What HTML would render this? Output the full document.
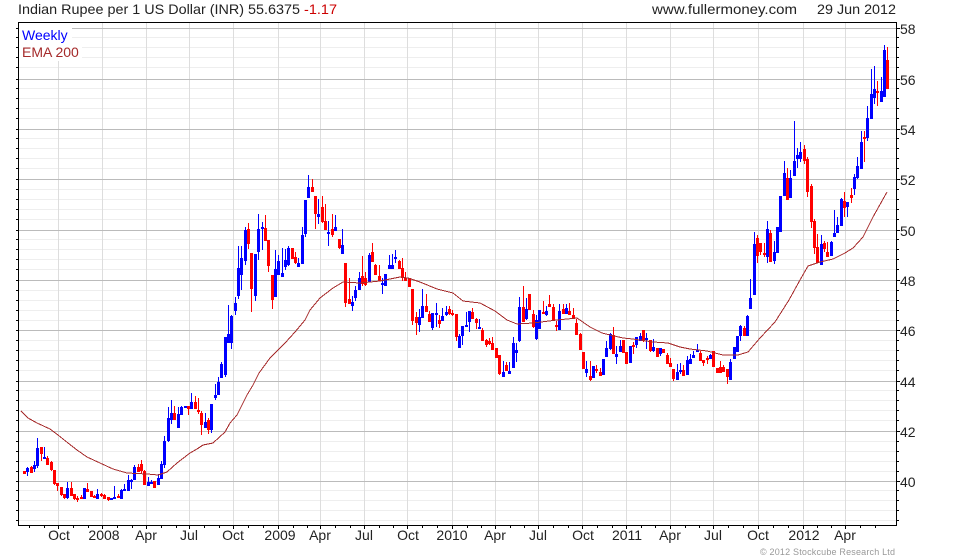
<!DOCTYPE html>
<html><head><meta charset="utf-8"><style>
html,body{margin:0;padding:0;background:#fff}
svg{display:block}
text{font-family:"Liberation Sans",Arial,sans-serif;font-size:14px;fill:#222}
</style></head><body>
<svg width="980" height="560" viewBox="0 0 980 560" xmlns="http://www.w3.org/2000/svg">
<rect width="980" height="560" fill="#fff"/>
<g shape-rendering="crispEdges" fill="none">
<path stroke="#eee" d="M19 37.5H896M19 47.5H896M19 57.5H896M19 67.5H896M19 88.5H896M19 98.5H896M19 108.5H896M19 118.5H896M19 138.5H896M19 148.5H896M19 158.5H896M19 168.5H896M19 189.5H896M19 199.5H896M19 209.5H896M19 219.5H896M19 239.5H896M19 249.5H896M19 259.5H896M19 269.5H896M19 290.5H896M19 300.5H896M19 310.5H896M19 320.5H896M19 340.5H896M19 350.5H896M19 360.5H896M19 370.5H896M19 390.5H896M19 400.5H896M19 410.5H896M19 420.5H896M19 441.5H896M19 451.5H896M19 461.5H896M19 471.5H896M19 490.5H896M19 500.5H896M19 510.5H896M19 520.5H896"/>
<path stroke="#ddd" d="M58.5 23V525M102.5 23V525M146.5 23V525M189.5 23V525M233.5 23V525M278.5 23V525M320.5 23V525M364.5 23V525M407.5 23V525M452.5 23V525M495.5 23V525M538.5 23V525M582.5 23V525M626.5 23V525M670.5 23V525M713.5 23V525M758.5 23V525M803.5 23V525M845.5 23V525"/>
<path stroke="#bbb" d="M19 28.5H896M19 79.5H896M19 129.5H896M19 179.5H896M19 230.5H896M19 280.5H896M19 330.5H896M19 381.5H896M19 431.5H896M19 481.5H896"/>
<rect x="19" y="23" width="53" height="20" fill="#fff"/>
<rect x="19" y="43" width="63" height="18" fill="#fff"/>
<path stroke="#0000ff" d="M27.5 467V476M34.5 461V472M37.5 438V468M44.5 447V459M67.5 482V499M97.5 489V499M114.5 486V499M121.5 489V499M124.5 484V491M128.5 475V491M131.5 479V489M134.5 465V480M148.5 477V486M151.5 480V484M158.5 474V485M161.5 461V479M164.5 436V468M168.5 407V442M171.5 400V424M178.5 407V428M181.5 406V415M191.5 393V409M205.5 413V428M211.5 404V433M215.5 384V400M218.5 377V395M221.5 362V378M225.5 337V377M228.5 305V343M231.5 315V349M235.5 297V315M238.5 246V299M241.5 246V290M245.5 227V265M255.5 254V301M258.5 214V260M262.5 222V250M275.5 250V297M278.5 255V275M282.5 248V277M285.5 249V270M288.5 246V266M298.5 258V267M302.5 227V264M305.5 200V237M308.5 175V198M318.5 199V224M328.5 221V246M335.5 215V231M342.5 229V254M352.5 296V311M355.5 286V301M359.5 272V290M369.5 253V282M382.5 278V294M389.5 255V269M392.5 254V269M395.5 250V263M419.5 309V332M422.5 289V318M432.5 313V330M436.5 303V327M442.5 308V321M446.5 306V316M459.5 334V348M462.5 326V345M466.5 312V327M469.5 311V332M479.5 319V329M503.5 361V377M509.5 362V374M513.5 337V368M516.5 343V362M519.5 297V342M526.5 298V320M536.5 315V340M546.5 306V316M559.5 304V330M566.5 304V314M586.5 361V377M606.5 341V357M610.5 333V350M616.5 346V364M620.5 340V352M636.5 337V348M640.5 333V341M646.5 333V349M653.5 339V352M660.5 348V356M677.5 364V380M680.5 363V374M687.5 356V375M690.5 354V364M693.5 351V358M697.5 344V352M710.5 354V359M730.5 359V380M740.5 325V341M747.5 315V336M750.5 279V309M754.5 232V295M767.5 221V263M774.5 241V264M784.5 161V196M790.5 170V198M794.5 121V176M797.5 148V168M800.5 142V162M821.5 235V265M831.5 241V256M834.5 210V237M837.5 217V233M841.5 198V226M847.5 202V217M854.5 174V195M857.5 157V179M861.5 131V169M867.5 106V141M871.5 69V119M874.5 66V104M881.5 77V102M884.5 45V97"/>
<path stroke="#ff0000" d="M31.5 466V473M41.5 447V461M47.5 456V465M51.5 461V471M54.5 470V485M57.5 483V491M61.5 487V496M64.5 494V499M71.5 482V496M74.5 494V500M77.5 496V502M81.5 495V499M87.5 483V492M94.5 495V498M101.5 493V497M104.5 494V499M108.5 497V501M118.5 494V498M138.5 464V472M141.5 460V474M144.5 470V485M174.5 406V420M188.5 406V415M195.5 396V409M198.5 398V414M201.5 411V435M208.5 418V434M248.5 223V249M251.5 253V312M265.5 215V241M268.5 240V272M272.5 275V309M295.5 252V264M312.5 179V192M315.5 196V229M322.5 196V223M325.5 204V230M332.5 214V237M339.5 239V249M345.5 263V307M349.5 278V304M362.5 256V286M365.5 272V286M372.5 243V262M375.5 264V275M379.5 265V281M399.5 260V269M402.5 258V281M405.5 272V281M412.5 289V325M416.5 312V335M426.5 294V312M429.5 311V322M439.5 315V328M449.5 306V315M452.5 310V316M456.5 314V341M472.5 308V319M476.5 318V329M482.5 328V341M486.5 339V347M489.5 338V345M492.5 337V350M499.5 355V375M506.5 362V371M523.5 286V322M533.5 310V328M543.5 301V314M549.5 295V307M553.5 304V321M556.5 321V331M563.5 304V314M569.5 303V315M573.5 308V319M576.5 319V335M580.5 333V350M590.5 361V381M596.5 365V373M600.5 368V376M613.5 327V354M633.5 342V354M643.5 330V342M650.5 340V352M660.5 352V352M667.5 353V364M670.5 358V367M673.5 369V381M683.5 365V376M700.5 351V361M703.5 360V366M707.5 356V364M720.5 361V373M723.5 365V372M727.5 369V384M744.5 326V336M757.5 235V263M760.5 243V255M764.5 243V257M770.5 230V262M787.5 168V200M804.5 145V164M807.5 157V197M811.5 184V228M814.5 219V254M817.5 234V263M824.5 241V252M827.5 242V257M844.5 192V217M851.5 188V203M864.5 131V162M877.5 81V106M887.5 47V89"/>
<path stroke="#0000ff" stroke-width="3" d="M27.5 468V472M34.5 465V469M37.5 448V466M44.5 457V459M67.5 488V498M84.5 488V499M97.5 494V499M111.5 498V500M114.5 497V499M121.5 490V499M124.5 489V491M128.5 480V491M131.5 480V482M134.5 467V480M148.5 482V486M151.5 482V484M158.5 478V485M161.5 464V479M164.5 441V465M168.5 418V441M171.5 413V420M178.5 414V428M181.5 407V415M185.5 406V408M191.5 402V409M205.5 422V428M211.5 404V430M215.5 395V398M218.5 382V395M221.5 364V378M225.5 337V375M228.5 334V343M231.5 316V343M235.5 303V311M238.5 268V296M241.5 258V275M245.5 230V261M255.5 254V296M258.5 229V252M262.5 227V229M275.5 269V297M278.5 261V275M282.5 273V277M285.5 260V267M288.5 248V265M298.5 263V267M302.5 235V264M305.5 200V234M308.5 187V198M318.5 214V217M328.5 232V234M335.5 227V231M342.5 245V254M352.5 302V306M355.5 290V298M359.5 278V290M369.5 255V282M382.5 283V285M385.5 274V286M389.5 265V269M392.5 265V269M395.5 257V259M419.5 317V325M422.5 306V318M432.5 313V328M436.5 313V315M442.5 316V321M446.5 312V315M459.5 336V348M462.5 326V336M466.5 325V327M469.5 311V322M479.5 327V329M503.5 372V377M509.5 371V374M513.5 343V368M516.5 350V353M519.5 307V341M526.5 309V319M536.5 320V339M539.5 310V329M546.5 311V315M559.5 311V330M566.5 308V314M586.5 369V373M593.5 366V378M603.5 359V375M606.5 348V357M610.5 334V349M616.5 354V357M620.5 346V352M630.5 346V363M636.5 337V345M640.5 336V341M646.5 338V340M653.5 347V351M660.5 348V354M677.5 372V380M680.5 370V372M687.5 360V375M690.5 359V364M693.5 355V358M697.5 350V352M710.5 355V359M730.5 362V380M734.5 347V359M737.5 336V352M740.5 326V336M747.5 316V336M750.5 298V309M754.5 244V295M767.5 229V257M774.5 252V261M777.5 227V253M780.5 196V232M784.5 173V196M790.5 178V198M794.5 161V176M797.5 155V159M800.5 152V159M821.5 244V265M831.5 242V256M834.5 233V237M837.5 225V233M841.5 199V226M847.5 202V207M854.5 177V189M857.5 166V178M861.5 142V169M867.5 118V138M871.5 94V119M874.5 89V98M881.5 91V102M884.5 50V97"/>
<path stroke="#ff0000" stroke-width="3" d="M24.5 471V474M31.5 467V473M41.5 447V454M47.5 458V465M51.5 462V470M54.5 470V484M57.5 483V486M61.5 487V495M64.5 494V498M71.5 488V496M74.5 494V499M77.5 498V500M81.5 497V499M87.5 489V492M91.5 491V497M94.5 496V498M101.5 494V496M104.5 495V499M108.5 497V500M118.5 496V498M138.5 467V472M141.5 464V471M144.5 471V485M154.5 481V488M174.5 413V420M188.5 406V409M195.5 402V409M198.5 410V412M201.5 413V425M208.5 420V430M248.5 229V244M251.5 253V289M265.5 228V241M268.5 240V266M272.5 275V300M292.5 248V259M295.5 257V263M312.5 187V192M315.5 196V214M322.5 207V222M325.5 221V230M332.5 229V235M339.5 239V248M345.5 263V303M349.5 299V304M362.5 276V284M365.5 278V285M372.5 252V262M375.5 265V275M379.5 276V281M399.5 261V269M402.5 268V278M405.5 278V281M409.5 278V287M412.5 289V321M416.5 317V323M426.5 306V312M429.5 314V322M439.5 320V324M449.5 309V314M452.5 313V315M456.5 314V337M472.5 312V319M476.5 319V323M482.5 330V341M486.5 340V345M489.5 341V344M492.5 343V350M496.5 348V358M499.5 355V374M506.5 365V371M523.5 307V322M529.5 294V310M533.5 314V327M543.5 312V314M549.5 304V307M553.5 307V320M556.5 325V327M563.5 309V314M569.5 311V315M573.5 315V319M576.5 323V335M580.5 334V350M583.5 352V369M590.5 376V380M596.5 369V371M600.5 372V376M613.5 335V354M623.5 340V353M626.5 352V364M633.5 345V347M643.5 330V341M650.5 340V351M657.5 348V357M663.5 349V353M667.5 355V364M670.5 363V367M673.5 369V379M683.5 370V376M700.5 353V361M703.5 360V363M707.5 358V360M713.5 351V367M717.5 368V373M720.5 367V373M723.5 367V372M727.5 369V377M744.5 328V336M757.5 238V256M760.5 243V252M764.5 253V255M770.5 233V262M787.5 178V200M804.5 149V161M807.5 159V192M811.5 186V222M814.5 221V248M817.5 247V263M824.5 243V249M827.5 252V257M844.5 201V208M851.5 195V198M864.5 137V139M877.5 91V93M887.5 60V89"/>
<path stroke="#000" d="M18.5 22V526M18 22.5H897M896.5 22V526M18 525.5H897"/>
<path stroke="#000" d="M16 28.5H18M16 37.5H18M16 47.5H18M16 57.5H18M16 67.5H18M16 79.5H18M16 88.5H18M16 98.5H18M16 108.5H18M16 118.5H18M16 129.5H18M16 138.5H18M16 148.5H18M16 158.5H18M16 168.5H18M16 179.5H18M16 189.5H18M16 199.5H18M16 209.5H18M16 219.5H18M16 230.5H18M16 239.5H18M16 249.5H18M16 259.5H18M16 269.5H18M16 280.5H18M16 290.5H18M16 300.5H18M16 310.5H18M16 320.5H18M16 330.5H18M16 340.5H18M16 350.5H18M16 360.5H18M16 370.5H18M16 381.5H18M16 390.5H18M16 400.5H18M16 410.5H18M16 420.5H18M16 431.5H18M16 441.5H18M16 451.5H18M16 461.5H18M16 471.5H18M16 481.5H18M16 490.5H18M16 500.5H18M16 510.5H18M16 520.5H18"/>
<path stroke="#000" d="M897 28.5H900M897 37.5H899M897 47.5H899M897 57.5H899M897 67.5H899M897 79.5H900M897 88.5H899M897 98.5H899M897 108.5H899M897 118.5H899M897 129.5H900M897 138.5H899M897 148.5H899M897 158.5H899M897 168.5H899M897 179.5H900M897 189.5H899M897 199.5H899M897 209.5H899M897 219.5H899M897 230.5H900M897 239.5H899M897 249.5H899M897 259.5H899M897 269.5H899M897 280.5H900M897 290.5H899M897 300.5H899M897 310.5H899M897 320.5H899M897 330.5H900M897 340.5H899M897 350.5H899M897 360.5H899M897 370.5H899M897 381.5H900M897 390.5H899M897 400.5H899M897 410.5H899M897 420.5H899M897 431.5H900M897 441.5H899M897 451.5H899M897 461.5H899M897 471.5H899M897 481.5H900M897 490.5H899M897 500.5H899M897 510.5H899M897 520.5H899"/>
<path stroke="#000" d="M29.5 526V528M44.5 526V528M58.5 526V529M73.5 526V528M88.5 526V528M102.5 526V529M117.5 526V528M132.5 526V528M146.5 526V529M161.5 526V528M176.5 526V528M189.5 526V529M204.5 526V528M219.5 526V528M233.5 526V529M248.5 526V528M263.5 526V528M278.5 526V529M293.5 526V528M307.5 526V528M320.5 526V529M335.5 526V528M350.5 526V528M364.5 526V529M379.5 526V528M393.5 526V528M407.5 526V529M422.5 526V528M437.5 526V528M452.5 526V529M467.5 526V528M481.5 526V528M495.5 526V529M510.5 526V528M524.5 526V528M538.5 526V529M553.5 526V528M568.5 526V528M582.5 526V529M597.5 526V528M612.5 526V528M626.5 526V529M641.5 526V528M655.5 526V528M670.5 526V529M685.5 526V528M699.5 526V528M713.5 526V529M728.5 526V528M743.5 526V528M758.5 526V529M773.5 526V528M788.5 526V528M803.5 526V529M817.5 526V528M831.5 526V528M845.5 526V529M860.5 526V528M875.5 526V528"/>
<polyline stroke="#a52a2a" points="21,411 28,418 37,423 50,429 58,435 68,443 77,450 87,457 100,463 113,469 127,473 147,474 158,475 167,472 177,463 190,453 197,449 203,445 213,443 225,432 230,423 237,415 247,395 253,385 259,373 270,358 285,343 295,332 305,320 310,310 320,298 333,288 343,282 360,283 380,281 400,277 408,278 420,282 437,289 453,293 463,301 480,303 495,311 507,320 517,324 533,323 557,320 577,318 590,327 602,333 610,335 623,338 633,339 653,342 668,343 680,347 690,349 707,351 723,355 738,355 748,352 760,338 775,322 789,300 800,280 808,266 820,262 833,259 845,253 853,248 863,237 873,217 887,192"/>
</g>
<text x="18" y="14" textLength="282" lengthAdjust="spacingAndGlyphs">Indian Rupee per 1 US Dollar (INR) 55.6375</text>
<text x="304" y="14" textLength="33" lengthAdjust="spacingAndGlyphs" style="fill:#cc0000">-1.17</text>
<text x="652" y="14" textLength="145" lengthAdjust="spacingAndGlyphs">www.fullermoney.com</text>
<text x="817" y="14" textLength="79" lengthAdjust="spacingAndGlyphs">29 Jun 2012</text>
<text x="22" y="40" style="fill:#0000ff">Weekly</text>
<text x="22" y="57" style="fill:#a52a2a">EMA 200</text>
<g text-anchor="start">
<text x="900" y="34">58</text><text x="900" y="85">56</text><text x="900" y="135">54</text><text x="900" y="185">52</text><text x="900" y="236">50</text><text x="900" y="286">48</text><text x="900" y="336">46</text><text x="900" y="387">44</text><text x="900" y="437">42</text><text x="900" y="487">40</text>
</g>
<g text-anchor="middle">
<text x="59" y="540">Oct</text><text x="104" y="540">2008</text><text x="146" y="540">Apr</text><text x="189" y="540">Jul</text><text x="233" y="540">Oct</text><text x="280" y="540">2009</text><text x="320" y="540">Apr</text><text x="364" y="540">Jul</text><text x="408" y="540">Oct</text><text x="452" y="540">2010</text><text x="495" y="540">Apr</text><text x="538" y="540">Jul</text><text x="583" y="540">Oct</text><text x="627" y="540">2011</text><text x="670" y="540">Apr</text><text x="713" y="540">Jul</text><text x="758" y="540">Oct</text><text x="804" y="540">2012</text><text x="845" y="540">Apr</text>
</g>
<text x="760" y="555" textLength="135" lengthAdjust="spacing" style="font-size:9px;fill:#999">© 2012 Stockcube Research Ltd</text>
</svg>
</body></html>
